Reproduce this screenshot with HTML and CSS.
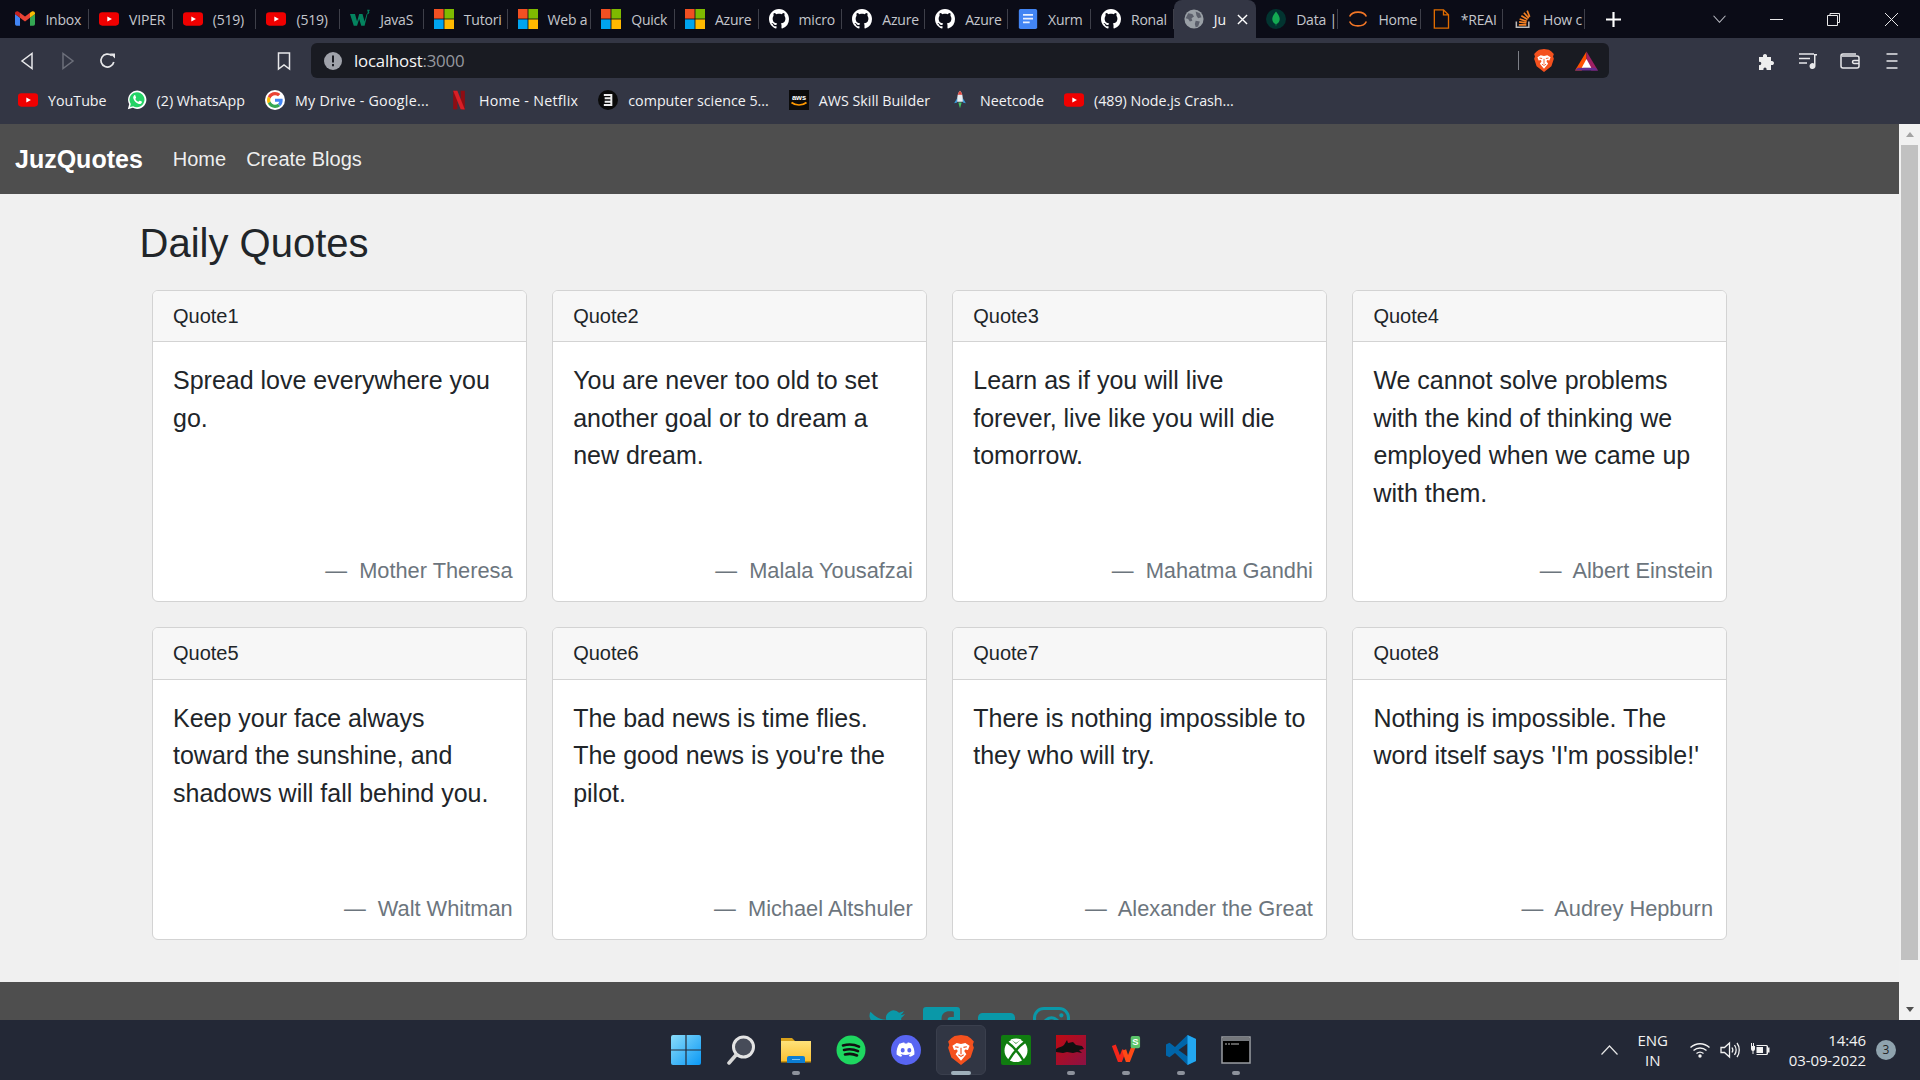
FILE: index.html
```html
<!DOCTYPE html>
<html lang="en">
<head>
<meta charset="utf-8">
<title>JuzQuotes</title>
<link rel="stylesheet" href="styles.css">
</head>
<body>
<svg class="defs" xmlns="http://www.w3.org/2000/svg">
  <defs>
    <linearGradient id="g-start" x1="0" y1="0" x2="1" y2="1"><stop offset="0" stop-color="#8adcfa"/><stop offset="1" stop-color="#0a98f5"/></linearGradient>
    <linearGradient id="g-msi" x1="0" y1="0" x2="1" y2="1"><stop offset="0" stop-color="#c00a12"/><stop offset="1" stop-color="#8a1244"/></linearGradient>
    <linearGradient id="g-folder" x1="0" y1="0" x2="0" y2="1"><stop offset="0" stop-color="#ffe27a"/><stop offset="1" stop-color="#fcc02f"/></linearGradient>
    <symbol id="i-gmail" viewBox="0 0 24 24"><path fill="#4285f4" d="M2 20h4V10.5L0 6v12a2 2 0 002 2z"/><path fill="#34a853" d="M18 20h4a2 2 0 002-2V6l-6 4.500z"/><path fill="#fbbc04" d="M18 4.500v6L24 6V5c0-2-2.300-3-3.800-1.900z"/><path fill="#ea4335" d="M6 10.500v-6l6 4.500 6-4.500v6L12 15z"/><path fill="#c5221f" d="M0 5v1l6 4.500v-6L3.800 3.100C2.300 2 0 3 0 5z"/></symbol>
    <symbol id="i-yt" viewBox="0 0 24 24"><rect x="0" y="4" width="24" height="16" rx="4" fill="#f00000"/><path fill="#fff" d="M10 9l5.500 3-5.500 3z"/></symbol>
    <symbol id="i-w3" viewBox="0 0 24 24"><path fill="#04845f" d="M0 6h6l2.500 9L11 6h4l2.500 9L20 6h1l-3.500 14h-4L11 12l-2.500 8h-4z"/><path fill="#04845f" d="M20.500 1h3v1l-1 1c1 .3 1 2.800-1 3l-1-.5v-1l1 .4c.5 0 .5-1-.5-1V3l.8-1h-1.300z"/></symbol>
    <symbol id="i-ms" viewBox="0 0 24 24"><rect x="0" y="0" width="11.500" height="11.500" fill="#f25022"/><rect x="12.500" y="0" width="11.500" height="11.500" fill="#7fba00"/><rect x="0" y="12.500" width="11.500" height="11.500" fill="#00a4ef"/><rect x="12.500" y="12.500" width="11.500" height="11.500" fill="#ffb900"/></symbol>
    <symbol id="i-gh" viewBox="0 0 16 16"><path fill="#fff" d="M8 0C3.580 0 0 3.580 0 8c0 3.540 2.290 6.530 5.470 7.590.4.070.55-.17.55-.38 0-.19-.01-.82-.01-1.490-2.010.37-2.530-.49-2.690-.94-.09-.23-.48-.94-.82-1.130-.28-.15-.68-.52-.01-.53.63-.01 1.080.58 1.230.82.72 1.210 1.870.87 2.330.66.07-.52.28-.87.51-1.070-1.780-.2-3.640-.89-3.640-3.950 0-.87.31-1.590.82-2.150-.08-.2-.36-1.020.08-2.120 0 0 .67-.21 2.200.82.64-.18 1.320-.27 2-.27.68 0 1.360.09 2 .27 1.530-1.040 2.200-.82 2.200-.82.44 1.100.16 1.920.08 2.120.51.56.82 1.270.82 2.150 0 3.070-1.870 3.750-3.650 3.950.29.25.54.73.54 1.480 0 1.070-.01 1.930-.01 2.200 0 .21.15.46.55.38A8.013 8.013 0 0016 8c0-4.420-3.580-8-8-8z"/></symbol>
    <symbol id="i-docs" viewBox="0 0 24 24"><rect x="1" y="0" width="22" height="24" rx="2" fill="#4285f4"/><path fill="#e8f0fe" d="M6 6h12v2.200H6zM6 10.500h12v2.200H6zM6 15h8v2.200H6z"/></symbol>
    <symbol id="i-globe" viewBox="0 0 24 24"><circle cx="12" cy="12" r="11.500" fill="#9aa0a6"/><path fill="#5b5f6b" d="M5 5l5 1 2 3-3 2 1 3-3 1-2-3-3-1zM14 3l5 2 2 5-4 1-2-3zM14 14l5 1-2 6-3 1-1-4z"/></symbol>
    <symbol id="i-mongo" viewBox="0 0 24 24"><circle cx="12" cy="12" r="12" fill="#023430"/><path fill="#13aa52" d="M12 3c2 3 4.500 5.500 4.500 9 0 3.500-2.500 5.500-4 6l-.5 3-.5-3c-1.500-.5-4-2.500-4-6 0-3.500 2.500-6 4.500-9z"/></symbol>
    <symbol id="i-jup" viewBox="0 0 24 24"><path fill="none" stroke="#f37626" stroke-width="2" d="M2 9c3-7 17-7 20 0M2 15c3 7 17 7 20 0"/></symbol>
    <symbol id="i-file" viewBox="0 0 24 24"><path fill="none" stroke="#e06c00" stroke-width="1.600" d="M4 1h11l6 6v16H4zM15 1v6h6"/></symbol>
    <symbol id="i-so" viewBox="0 0 24 24"><path fill="none" stroke="#bcbbbb" stroke-width="1.800" d="M4 15v7h15v-7"/><path fill="none" stroke="#f48024" stroke-width="2" d="M7 19h9M7.300 15.500l8.800 1.200M8 12l8.500 2.800M10 8l7.500 4.500M13 4.500l6 6.500M17 2l3 7.500"/></symbol>
    <symbol id="i-brave" viewBox="0 0 24 28"><path fill="#f4511e" d="M12 0l6 1 3 2 3 3-1 3 1 3-3 9-9 7-9-7-3-9 1-3-1-3 3-3 3-2z"/><path fill="#fff" d="M4 10l4-2.500 4 1 4-1 4 2.500-1.500 4-2.500-.5-1 1.500 2 3-5 6-5-6 2-3-1-1.500-2.500.5z"/><path fill="none" stroke="#f4511e" stroke-width="1.100" d="M6.500 11l3.200.6M17.500 11l-3.200.6M12 12v6M9.500 18.500L12 20l2.500-1.500"/></symbol>
    <symbol id="i-wa" viewBox="0 0 24 24"><path fill="#fff" d="M1 23l1.600-6A11 11 0 1 1 7 21.400z"/><path fill="#25d366" d="M3.600 20.400l1-3.600A9 9 0 1 1 7.400 19.400z"/><path fill="#fff" d="M8.500 6.500c-1 1-1.500 2.500-.5 4.500 1 2.500 3 4.500 5.500 5.500 2 .8 3.500 0 4.200-1.200.4-.8.300-1.300 0-1.500l-2.200-1c-.4-.1-.6 0-.8.300l-.7.800c-.2.200-.4.200-.7.100-1.500-.7-2.500-1.700-3.200-3-.1-.3 0-.5.200-.7l.5-.6c.2-.2.200-.4.100-.7L10 6.500c-.2-.5-1-.5-1.500 0z"/></symbol>
    <symbol id="i-g" viewBox="-6 -6 60 60"><circle cx="24" cy="24" r="30" fill="#fff"/><path fill="#EA4335" d="M24 9.500c3.540 0 6.710 1.220 9.210 3.600l6.850-6.850C35.900 2.380 30.470 0 24 0 14.620 0 6.510 5.380 2.560 13.220l7.980 6.190C12.430 13.720 17.740 9.500 24 9.500z"/><path fill="#4285F4" d="M46.980 24.550c0-1.570-.15-3.090-.38-4.550H24v9.020h12.940c-.58 2.960-2.260 5.480-4.780 7.180l7.730 6c4.510-4.180 7.090-10.360 7.090-17.650z"/><path fill="#FBBC05" d="M10.530 28.590c-.48-1.450-.76-2.990-.76-4.590s.27-3.140.76-4.590l-7.980-6.190C.92 16.460 0 20.120 0 24c0 3.880.92 7.540 2.560 10.780l7.970-6.190z"/><path fill="#34A853" d="M24 48c6.480 0 11.930-2.130 15.890-5.810l-7.730-6c-2.150 1.450-4.920 2.300-8.160 2.300-6.260 0-11.570-4.220-13.470-9.910l-7.980 6.190C6.510 42.620 14.620 48 24 48z"/></symbol>
    <symbol id="i-nf" viewBox="0 0 24 24"><path fill="#8f0d13" d="M5 1h5v22l-5 .5zM14 1h5v22.500l-5-.5z"/><path fill="#d81f26" d="M5 1h5l9 22.500-5-.5z"/></symbol>
    <symbol id="i-cs" viewBox="0 0 24 24"><circle cx="12" cy="12" r="12" fill="#0a0a0a"/><path fill="none" stroke="#ededed" stroke-width="2.400" d="M7 6h9v4H8M16 10v4H8M16 14v4H7"/></symbol>
    <symbol id="i-aws" viewBox="0 0 24 24"><rect width="24" height="24" fill="#0b0b0b"/><text class="aws-text" x="12" y="12" text-anchor="middle">aws</text><path fill="none" stroke="#f90" stroke-width="2" d="M3 15c5 4 13 4 18 0"/></symbol>
    <symbol id="i-rocket" viewBox="0 0 24 24"><path fill="#e6edf3" d="M12 1c3 3 3.500 7 3.500 13h-7C8.500 8 9 4 12 1z"/><path fill="#e0483e" d="M12 1c1.300 1.300 2.200 3 2.700 4.800H9.300C9.800 4 10.700 2.300 12 1z"/><path fill="#3b9ddd" d="M8.500 10L5 16l3.500-1zM15.500 10L19 16l-3.500-1z"/><path fill="#43c463" d="M10 15h4l-2 7z"/></symbol>
    <symbol id="i-close" viewBox="0 0 12 12"><path stroke="currentColor" stroke-width="1.500" fill="none" d="M1 1l10 10M11 1L1 11"/></symbol>
  </defs>
</svg>

<div class="screen">
  <header class="tabstrip">
    <div class="tabs">
      <div class="tab"><svg class="fav"><use href="#i-gmail"/></svg><span class="tab-title">Inbox</span></div>
      <div class="tab"><svg class="fav"><use href="#i-yt"/></svg><span class="tab-title">VIPER</span></div>
      <div class="tab"><svg class="fav"><use href="#i-yt"/></svg><span class="tab-title">(519)</span></div>
      <div class="tab"><svg class="fav"><use href="#i-yt"/></svg><span class="tab-title">(519)</span></div>
      <div class="tab"><svg class="fav"><use href="#i-w3"/></svg><span class="tab-title">JavaS</span></div>
      <div class="tab"><svg class="fav"><use href="#i-ms"/></svg><span class="tab-title">Tutori</span></div>
      <div class="tab"><svg class="fav"><use href="#i-ms"/></svg><span class="tab-title">Web a</span></div>
      <div class="tab"><svg class="fav"><use href="#i-ms"/></svg><span class="tab-title">Quick</span></div>
      <div class="tab"><svg class="fav"><use href="#i-ms"/></svg><span class="tab-title">Azure</span></div>
      <div class="tab"><svg class="fav"><use href="#i-gh"/></svg><span class="tab-title">micro</span></div>
      <div class="tab"><svg class="fav"><use href="#i-gh"/></svg><span class="tab-title">Azure</span></div>
      <div class="tab"><svg class="fav"><use href="#i-gh"/></svg><span class="tab-title">Azure</span></div>
      <div class="tab"><svg class="fav"><use href="#i-docs"/></svg><span class="tab-title">Xurm</span></div>
      <div class="tab"><svg class="fav"><use href="#i-gh"/></svg><span class="tab-title">Ronal</span></div>
      <div class="tab active"><svg class="fav"><use href="#i-globe"/></svg><span class="tab-title">Ju</span><svg class="tab-close"><use href="#i-close"/></svg></div>
      <div class="tab"><svg class="fav"><use href="#i-mongo"/></svg><span class="tab-title">Data |</span></div>
      <div class="tab"><svg class="fav"><use href="#i-jup"/></svg><span class="tab-title">Home</span></div>
      <div class="tab"><svg class="fav"><use href="#i-file"/></svg><span class="tab-title">*REAI</span></div>
      <div class="tab"><svg class="fav"><use href="#i-so"/></svg><span class="tab-title">How c</span></div>
    </div>
    <svg class="newtab" viewBox="0 0 14 14"><path stroke="#fff" stroke-width="2" d="M7 0v14M0 7h14"/></svg>
    <svg class="tab-menu" viewBox="0 0 12 7"><path fill="none" stroke="#b8bac2" d="M.5.5L6 6.500 11.500.5"/></svg>
    <svg class="win win-min" viewBox="0 0 13 13"><path stroke="#e8e8e8" d="M0 6.500h13"/></svg>
    <svg class="win win-max" viewBox="0 0 13 13"><path fill="none" stroke="#e8e8e8" d="M.5 2.500h10v10H.5zM3 2.500V.5h9.500v9h-2"/></svg>
    <svg class="win win-close" viewBox="0 0 13 13"><path stroke="#e8e8e8" d="M0 0l13 13M13 0L0 13"/></svg>
  </header>

  <div class="toolbar">
    <svg class="tool" viewBox="0 0 20 20"><path fill="none" stroke="#e8e8ea" stroke-width="1.500" d="M15 2.500v15L5 10z"/></svg>
    <svg class="tool tool-fwd" viewBox="0 0 20 20"><path fill="none" stroke="#6c6f7a" stroke-width="1.500" d="M5 2.500v15L15 10z"/></svg>
    <svg class="tool tool-reload" viewBox="0 0 20 20"><path fill="none" stroke="#e8e8ea" stroke-width="1.700" d="M15.800 11a6.500 6.500 0 1 1-2-6.300"/><path fill="#e8e8ea" d="M12 2.500h5v5z"/></svg>
    <svg class="tool tool-mark" viewBox="0 0 20 20"><path fill="none" stroke="#e8e8ea" stroke-width="1.500" d="M4.500 2h11v16L10 14l-5.500 4z"/></svg>
    <div class="addressbar">
      <svg class="addr-info" viewBox="0 0 18 18"><circle cx="9" cy="9" r="9" fill="#9fa2aa"/><path fill="#191b22" d="M8 3.500h2v7H8zM8 12h2v2.200H8z"/></svg>
      <span class="addr-url">localhost<span class="addr-port">:3000</span></span>
      <span class="addr-sep"></span>
      <svg class="addr-brave"><use href="#i-brave"/></svg>
      <svg class="addr-bat" viewBox="0 0 24 20"><path fill="#ff5000" d="M12 0L0 20h7l5-9z"/><path fill="#9e1f63" d="M12 0l12 20h-7l-5-9z"/><path fill="#662d91" d="M0 20h24l-3-3H3z"/><path fill="#fff" d="M12 8l5 9H7z"/></svg>
    </div>
    <div class="tool-actions">
      <svg class="tool" viewBox="0 0 20 20"><path fill="#eee" d="M2 6h4c-1-4 5-4 4 0h4v4c4-1 4 5 0 4v5H9.500c1-3.500-4-3.500-3 0H2v-5c3 1 3-4 0-3z"/></svg>
      <svg class="tool" viewBox="0 0 20 20"><path fill="none" stroke="#e8e8ea" stroke-width="1.500" d="M0 3h15M0 7.500h11M0 12h8"/><path fill="#e8e8ea" d="M15 3h3v1.500h-1.500V15a3 3 0 1 1-1.500-2.500z"/></svg>
      <svg class="tool" viewBox="0 0 20 20"><path fill="none" stroke="#e8e8ea" stroke-width="1.500" d="M16 3H3a2 2 0 00-2 2v10a2 2 0 002 2h14a2 2 0 002-2V7a2 2 0 00-2-2H2M19 9.500h-5a1.500 1.500 0 000 3h5"/></svg>
      <svg class="tool" viewBox="0 0 20 20"><path stroke="#e8e8ea" stroke-width="1.500" d="M4.500 3h11M4.500 10h11M4.500 17h11"/></svg>
    </div>
  </div>

  <nav class="bookmarks">
    <a class="bm"><svg class="bm-ico"><use href="#i-yt"/></svg>YouTube</a>
    <a class="bm"><svg class="bm-ico"><use href="#i-wa"/></svg>(2) WhatsApp</a>
    <a class="bm bm-wide"><svg class="bm-ico"><use href="#i-g"/></svg>My Drive - Google...</a>
    <a class="bm bm-wide"><svg class="bm-ico"><use href="#i-nf"/></svg>Home - Netflix</a>
    <a class="bm"><svg class="bm-ico"><use href="#i-cs"/></svg>computer science 5...</a>
    <a class="bm"><svg class="bm-ico"><use href="#i-aws"/></svg>AWS Skill Builder</a>
    <a class="bm"><svg class="bm-ico"><use href="#i-rocket"/></svg>Neetcode</a>
    <a class="bm"><svg class="bm-ico"><use href="#i-yt"/></svg>(489) Node.js Crash...</a>
  </nav>

  <div class="viewport">
    <div class="page">
      <div class="navbar">
        <a class="brand">JuzQuotes</a>
        <a class="navlink">Home</a>
        <a class="navlink">Create Blogs</a>
      </div>
      <main class="content">
        <h1 class="title">Daily Quotes</h1>
        <div class="grid">
          <article class="card"><div class="card-head">Quote1</div><div class="card-body"><p class="quote">Spread love everywhere you go.</p><p class="author">—&nbsp; Mother Theresa</p></div></article>
          <article class="card"><div class="card-head">Quote2</div><div class="card-body"><p class="quote">You are never too old to set another goal or to dream a new dream.</p><p class="author">—&nbsp; Malala Yousafzai</p></div></article>
          <article class="card"><div class="card-head">Quote3</div><div class="card-body"><p class="quote">Learn as if you will live forever, live like you will die tomorrow.</p><p class="author">—&nbsp; Mahatma Gandhi</p></div></article>
          <article class="card"><div class="card-head">Quote4</div><div class="card-body"><p class="quote">We cannot solve problems with the kind of thinking we employed when we came up with them.</p><p class="author">—&nbsp; Albert Einstein</p></div></article>
          <article class="card"><div class="card-head">Quote5</div><div class="card-body"><p class="quote">Keep your face always toward the sunshine, and shadows will fall behind you.</p><p class="author">—&nbsp; Walt Whitman</p></div></article>
          <article class="card"><div class="card-head">Quote6</div><div class="card-body"><p class="quote">The bad news is time flies. The good news is you're the pilot.</p><p class="author">—&nbsp; Michael Altshuler</p></div></article>
          <article class="card"><div class="card-head">Quote7</div><div class="card-body"><p class="quote">There is nothing impossible to they who will try.</p><p class="author">—&nbsp; Alexander the Great</p></div></article>
          <article class="card"><div class="card-head">Quote8</div><div class="card-body"><p class="quote">Nothing is impossible. The word itself says 'I'm possible!'</p><p class="author">—&nbsp; Audrey Hepburn</p></div></article>
        </div>
      </main>
      <footer class="footer">
        <svg class="social" viewBox="0 0 24 24"><path d="M23.950 4.570a10 10 0 01-2.820.77 4.960 4.960 0 002.160-2.720c-.95.55-2 .96-3.120 1.190a4.920 4.920 0 00-8.380 4.480C7.690 8.090 4.070 6.130 1.640 3.160A4.820 4.820 0 00.98 5.640c0 1.710.87 3.210 2.180 4.100a4.900 4.900 0 01-2.230-.62v.06c0 2.390 1.700 4.380 3.950 4.840a4.900 4.900 0 01-2.210.08 4.940 4.940 0 004.600 3.420A9.870 9.870 0 010 19.540a14 14 0 007.560 2.210c9.050 0 14-7.500 14-13.980 0-.21 0-.42-.01-.63A9.940 9.940 0 0024 4.590z"/></svg>
        <svg class="social" viewBox="0 0 24 24"><path fill-rule="evenodd" d="M2 0h20a2 2 0 012 2v20a2 2 0 01-2 2h-6v-9h3l.5-4H16V8.500c0-1.200.4-2 2-2h2V3c-.5-.1-1.600-.2-3-.2-3 0-5 1.800-5 5V11H9v4h3v9H2a2 2 0 01-2-2V2a2 2 0 012-2z"/></svg>
        <svg class="social social-yt" viewBox="0 0 24 24"><path fill-rule="evenodd" d="M3 0h18a3 3 0 013 3v12a3 3 0 01-3 3H3a3 3 0 01-3-3V3a3 3 0 013-3zm7 5v8l6-4z"/></svg>
        <svg class="social" viewBox="0 0 24 24"><path fill-rule="evenodd" d="M7 0h10a7 7 0 017 7v10a7 7 0 01-7 7H7a7 7 0 01-7-7V7a7 7 0 017-7zm0 2a5 5 0 00-5 5v10a5 5 0 005 5h10a5 5 0 005-5V7a5 5 0 00-5-5zm5 4a6 6 0 110 12 6 6 0 010-12zm0 2a4 4 0 100 8 4 4 0 000-8zm6.400-4a1.400 1.400 0 110 2.800 1.400 1.400 0 010-2.800z"/></svg>
      </footer>
    </div>
    <div class="scrollbar">
      <div class="sb-btn"><span class="arrow-up"></span></div>
      <div class="sb-track"><div class="sb-thumb"></div></div>
      <div class="sb-btn"><span class="arrow-down"></span></div>
    </div>
  </div>

  <footer class="taskbar">
    <div></div>
    <div class="dock">
      <div class="slot"><div class="tile">
        <svg class="app" viewBox="0 0 30 30"><path fill="url(#g-start)" d="M2 0h12.400v14.400H0V2a2 2 0 012-2zM15.600 0H28a2 2 0 012 2v12.400H15.600zM0 15.600h14.400V30H2a2 2 0 01-2-2zM15.600 15.600H30V28a2 2 0 01-2 2H15.600z"/></svg>
      </div></div>
      <div class="slot"><div class="tile">
        <svg class="app" viewBox="0 0 30 30"><circle cx="17.500" cy="12" r="10" fill="#474c59" stroke="#e4e4e4" stroke-width="3"/><path stroke="#d8d8d8" stroke-width="3.500" stroke-linecap="round" d="M10 20l-7 8"/></svg>
      </div></div>
      <div class="slot"><div class="tile">
        <svg class="app" viewBox="0 0 30 30"><path fill="#d9a21b" d="M0 3h11l3 3v4H0z"/><path fill="url(#g-folder)" d="M0 6h30v21H0z"/><path fill="#c9930f" d="M0 26h30v1.500H0z"/><path fill="#0c7ed4" d="M6 23a2 2 0 012-2h14a2 2 0 012 2v5H6z"/><path fill="#7cc4f5" d="M11 24h8v1h-8z"/></svg>
        <span class="dot"></span>
      </div></div>
      <div class="slot"><div class="tile">
        <svg class="app" viewBox="0 0 30 30"><circle cx="15" cy="15" r="14.500" fill="#1ed760"/><path fill="none" stroke="#111" stroke-width="2.600" stroke-linecap="round" d="M7 10.500c5-1.500 11-1.300 16 1.200M8 15c4.500-1.200 9.500-1 14 1.200M9 19.500c3.800-1 8-.9 12 1"/></svg>
      </div></div>
      <div class="slot"><div class="tile">
        <svg class="app" viewBox="0 0 30 30"><circle cx="15" cy="15" r="15" fill="#5865f2"/><path fill="#fff" fill-rule="evenodd" d="M9.500 8.500c1.500-.7 3-1 3.800-1l.5 1c.8-.1 1.600-.1 2.400 0l.5-1c.8 0 2.300.3 3.800 1 2.300 3.500 3.200 7 2.900 11-1.500 1.200-3.200 2-4.600 2.300l-1-1.700c.6-.2 1.100-.5 1.600-.8l-.4-.3c-2.900 1.300-6 1.300-9 0l-.4.300c.5.300 1 .6 1.600.8l-1 1.700c-1.400-.3-3.100-1.100-4.600-2.300-.3-4.500.8-8 2.900-11zM11.700 13a2 2.200 0 100 4.400 2 2.200 0 000-4.400zm6.600 0a2 2.200 0 100 4.400 2 2.200 0 000-4.400z"/></svg>
      </div></div>
      <div class="slot"><div class="tile tile-on">
        <svg class="app"><use href="#i-brave"/></svg>
        <span class="dot dot-on"></span>
      </div></div>
      <div class="slot"><div class="tile">
        <svg class="app" viewBox="0 0 30 30"><rect width="30" height="30" rx="2" fill="#107c10"/><circle cx="15" cy="15.500" r="11.500" fill="#fff"/><path fill="none" stroke="#107c10" stroke-width="2.400" d="M5.500 6.500C12 11 18 18 23 26.500M24.500 6.500C18 11 12 18 7 26.500"/><path fill="#107c10" d="M9 3.500C13 7 14 8 15 9c1-1 2-2 6-5.500z"/><path fill="#fff" d="M9.500 4.500c3.500-1.200 7.500-1.200 11 0L15 8z"/></svg>
      </div></div>
      <div class="slot"><div class="tile">
        <svg class="app" viewBox="0 0 30 30"><rect width="30" height="30" fill="url(#g-msi)"/><path fill="#111" d="M0 14c3-2 6-2 8-4l3-5 1 3 5-1 3 3 6 1 2 3-5 1 3 3-5-1-4 1-6-1-4 1-7-1z"/></svg>
        <span class="dot"></span>
      </div></div>
      <div class="slot"><div class="tile">
        <svg class="app" viewBox="0 0 32 30"><path fill="none" stroke="#f2261a" stroke-width="4.500" stroke-linejoin="bevel" d="M3 10l6.500 17L14 15"/><path fill="none" stroke="#ff4a16" stroke-width="4.500" stroke-linejoin="bevel" d="M14 15l4 12 7-18"/><rect x="21" y="0" width="10" height="13" rx="2" fill="#5cc46a"/><text class="wps-s" x="26" y="10" text-anchor="middle">S</text></svg>
        <span class="dot"></span>
      </div></div>
      <div class="slot"><div class="tile">
        <svg class="app" viewBox="0 0 30 30"><path fill="#0065a9" d="M21.500 0L9 12 3.500 7.800 0 9.600v10.800l3.500 1.800L9 18l12.500 12L30 26V4zM21.500 8.500v13L12.500 15z"/><path fill="#23a7f0" d="M21.500 0L30 4v22l-8.500 4z"/></svg>
        <span class="dot"></span>
      </div></div>
      <div class="slot"><div class="tile">
        <svg class="app" viewBox="0 0 30 30"><rect x="1" y="2" width="28" height="26" fill="#000" stroke="#9a9da3" stroke-width="1.500"/><rect x="2" y="3" width="26" height="3" fill="#74777c"/><path stroke="#bbb" d="M4 9h2M7 9h2M10 9h8"/></svg>
        <span class="dot"></span>
      </div></div>
    </div>
    <div class="tray">
      <svg class="tray-chev" viewBox="0 0 17 10"><path fill="none" stroke="#e6e6e6" stroke-width="1.200" d="M.5 9.500L8.500 1l8 8.500"/></svg>
      <div class="lang"><span>ENG</span><span>IN</span></div>
      <svg class="tray-ico" viewBox="0 0 20 20"><path fill="none" stroke="#f2f2f2" stroke-width="1.400" d="M.5 7.500c5.500-5 13.500-5 19 0M3.500 10.500c3.800-3.300 9.200-3.300 13 0M6.500 13.500c2.200-1.700 4.800-1.700 7 0"/><circle cx="10" cy="16" r="1.700" fill="#f2f2f2"/></svg>
      <svg class="tray-ico" viewBox="0 0 20 20"><path fill="none" stroke="#f2f2f2" stroke-width="1.300" d="M1 7.500h3.500L9.500 3v14l-5-4.500H1zM12 7.500c1 1.500 1 3.500 0 5M14.500 5c2 3 2 7 0 10M17 3c3 4 3 10 0 14"/></svg>
      <svg class="tray-ico" viewBox="0 0 20 20"><path fill="#f2f2f2" d="M1 3h1v3h1V3h1v3h1v3c0 1-1 2-1.500 2v3H2.500v-3C2 11 1 10 1 9zM6.500 5h10a1.500 1.500 0 011.500 1.500v1h1.500v5H18v1a1.500 1.500 0 01-1.500 1.500h-10V14h10V6h-10z"/><path fill="#f2f2f2" d="M6.500 7h6.500v6H6.500z"/></svg>
      <div class="clock"><span>14:46</span><span>03-09-2022</span></div>
      <span class="notif">3</span>
    </div>
  </footer>
</div>
</body>
</html>
```

FILE: styles.css
```css
* { box-sizing: border-box; }
html, body { margin: 0; padding: 0; height: 100%; overflow: hidden; }
body { font-family: "Liberation Sans", Arial, sans-serif; background: #f0f0f0; }
.defs { display: block; width: 0; height: 0; }
.aws-text { font: bold 9px "Liberation Sans", sans-serif; fill: #fff; }
.wps-s { font: bold 10px "Liberation Sans", sans-serif; fill: #fff; }

.screen { display: flex; flex-direction: column; width: 1920px; height: 1080px; overflow: hidden; }

/* tab strip */
.tabstrip { flex: none; height: 38px; background: #0b0c17; display: flex; align-items: center; padding-left: 5.4px; font-family: "Open Sans", sans-serif; }
.tabs { display: flex; height: 38px; align-items: center; }
.tab { flex: none; width: 83.7px; height: 20px; display: flex; align-items: center; padding-left: 10px; border-right: 1px solid #3e3f49; }
.tab:nth-child(n+11) { width: 82.9px; }
.tab.active, .tab.active ~ .tab { width: 82.3px; }
.tab.active { height: 38px; align-self: flex-end; background: #333644; border-right: 0; border-radius: 8px 8px 0 0; }
.fav { flex: none; width: 20px; height: 20px; }
.tab-title { margin-left: 10px; font-size: 14px; letter-spacing: -0.2px; color: #c4c6cc; white-space: nowrap; }
.tab.active .tab-title { width: 14px; color: #f5f5f5; }
.tab-close { flex: none; width: 11px; height: 11px; margin-left: 9px; color: #fff; }
.newtab { flex: none; width: 15px; height: 15px; margin-left: 21px; }
.tab-menu { flex: none; width: 13px; height: 8px; margin-left: 92px; }
.win { flex: none; width: 13px; height: 13px; }
.win-min { margin-left: 43.5px; }
.win-max { margin-left: 44px; }
.win-close { margin-left: 45px; }

/* toolbar */
.toolbar { flex: none; height: 45px; background: #333644; display: flex; align-items: center; padding-left: 17px; font-family: "Open Sans", sans-serif; }
.tool { flex: none; width: 20px; height: 20px; }
.tool-fwd { margin-left: 21px; }
.tool-reload { margin-left: 20px; }
.tool-mark { margin-left: 155.5px; }
.addressbar { flex: none; margin-left: 17.5px; width: 1297.6px; height: 35px; background: #191b22; border-radius: 6px; display: flex; align-items: center; padding-left: 13px; }
.addr-info { flex: none; width: 18px; height: 18px; }
.addr-url { margin-left: 12px; font-size: 16.8px; letter-spacing: -0.2px; color: #f4f4f4; }
.addr-port { color: #96989f; }
.addr-sep { margin-left: auto; width: 1px; height: 19px; background: #7d7f87; }
.addr-brave { flex: none; width: 20px; height: 23px; margin-left: 15px; }
.addr-bat { flex: none; width: 23px; height: 20px; margin-left: 21px; margin-right: 11px; }
.tool-actions { flex: none; display: flex; gap: 21.5px; margin-left: 148.9px; }

/* bookmarks */
.bookmarks { flex: none; height: 41px; background: #333644; display: flex; align-items: flex-start; gap: 20px; padding: 6px 0 0 18px; font-family: "Open Sans", sans-serif; font-size: 14.25px; color: #f2f2f4; }
.bm { display: flex; align-items: center; gap: 10px; white-space: nowrap; height: 22px; }
.bm-wide { letter-spacing: 0.27px; }
.bm-ico { flex: none; width: 20px; height: 20px; }

/* viewport */
.viewport { flex: 1; min-height: 0; display: flex; }
.page { flex: 1; min-width: 0; overflow: hidden; background: #f0f0f0; }
.navbar { height: 70px; background: #4e4e4e; display: flex; align-items: center; padding-left: 15px; color: #fff; }
.brand { font-size: 25px; font-weight: 700; margin-right: 30px; }
.navlink { font-size: 20px; margin-right: 20px; color: rgba(255,255,255,.92); }
.content { padding: 25px 172px 0 139.5px; }
.title { margin: 0 0 22.8px; font-size: 40px; line-height: 48px; font-weight: 400; color: #212529; }
.grid { display: grid; grid-template-columns: repeat(4, 1fr); grid-auto-rows: 312.4px; column-gap: 25.5px; row-gap: 25px; margin-left: 12.5px; }
.card { display: flex; flex-direction: column; background: #fff; border: 1px solid #d3d3d3; border-radius: 6px; overflow: hidden; }
.card-head { flex: none; height: 51.5px; padding: 10px 20px; font-size: 20px; line-height: 30px; color: #212529; background: #f7f7f7; border-bottom: 1px solid #d3d3d3; }
.card-body { flex: 1; display: flex; flex-direction: column; padding: 20px 20px 14px; }
.quote { margin: 0; font-size: 25px; line-height: 37.5px; color: #212529; }
.author { margin: auto -7px 0 0; font-size: 21.8px; line-height: 32px; color: #6c757d; text-align: right; }

/* footer */
.footer { margin-top: 42.4px; height: 200px; background: #4e4e4e; display: flex; justify-content: center; align-items: flex-start; gap: 18px; padding: 25px 0 0 38px; }
.social { flex: none; width: 37px; height: 37px; fill: #0a98a8; }
.social-yt { margin-top: 6px; }

/* scrollbar */
.scrollbar { flex: none; width: 21px; background: #f1f1f1; display: flex; flex-direction: column; }
.sb-btn { flex: none; height: 21px; display: flex; align-items: center; justify-content: center; }
.sb-track { flex: 1; padding: 0 2px; }
.sb-thumb { height: 815px; background: #c1c1c1; }
.arrow-up { border: 4.5px solid transparent; border-top: 0; border-bottom: 5px solid #a3a3a3; }
.arrow-down { border: 4.5px solid transparent; border-bottom: 0; border-top: 5px solid #505050; }

/* taskbar */
.taskbar { flex: none; position: relative; height: 60px; background: #232836; display: grid; grid-template-columns: 1fr auto 1fr; color: #f2f2f2; font-family: "Open Sans", sans-serif; }
.dock { display: flex; padding: 5px 0 0 2px; }
.slot { width: 55px; display: flex; justify-content: center; }
.tile { width: 50px; height: 50px; padding-top: 9px; display: flex; flex-direction: column; align-items: center; border: 1px solid transparent; border-radius: 6px; }
.tile-on { background: #313644; border-color: #3a3f4d; }
.app { flex: none; width: 30px; height: 30px; }
.dot { flex: none; width: 8px; height: 4px; margin-top: 6px; background: #8d929c; border-radius: 2px; }
.dot-on { width: 20px; background: #9fb0bb; }
.tray { display: flex; align-items: center; justify-content: flex-end; padding-right: 24px; font-size: 15px; }
.tray-chev { flex: none; width: 17px; height: 10px; margin-right: 20px; }
.lang { display: flex; flex-direction: column; align-items: center; line-height: 20px; width: 30px; margin-right: 22px; }
.tray-ico { flex: none; width: 20px; height: 20px; margin-right: 10px; }
.clock { display: flex; flex-direction: column; align-items: flex-end; line-height: 20px; margin: 0 10px 0 9px; letter-spacing: -0.1px; }
.notif { width: 20px; height: 20px; border-radius: 50%; background: #8fa3ae; color: #222; font-size: 12px; line-height: 20px; text-align: center; }
```
